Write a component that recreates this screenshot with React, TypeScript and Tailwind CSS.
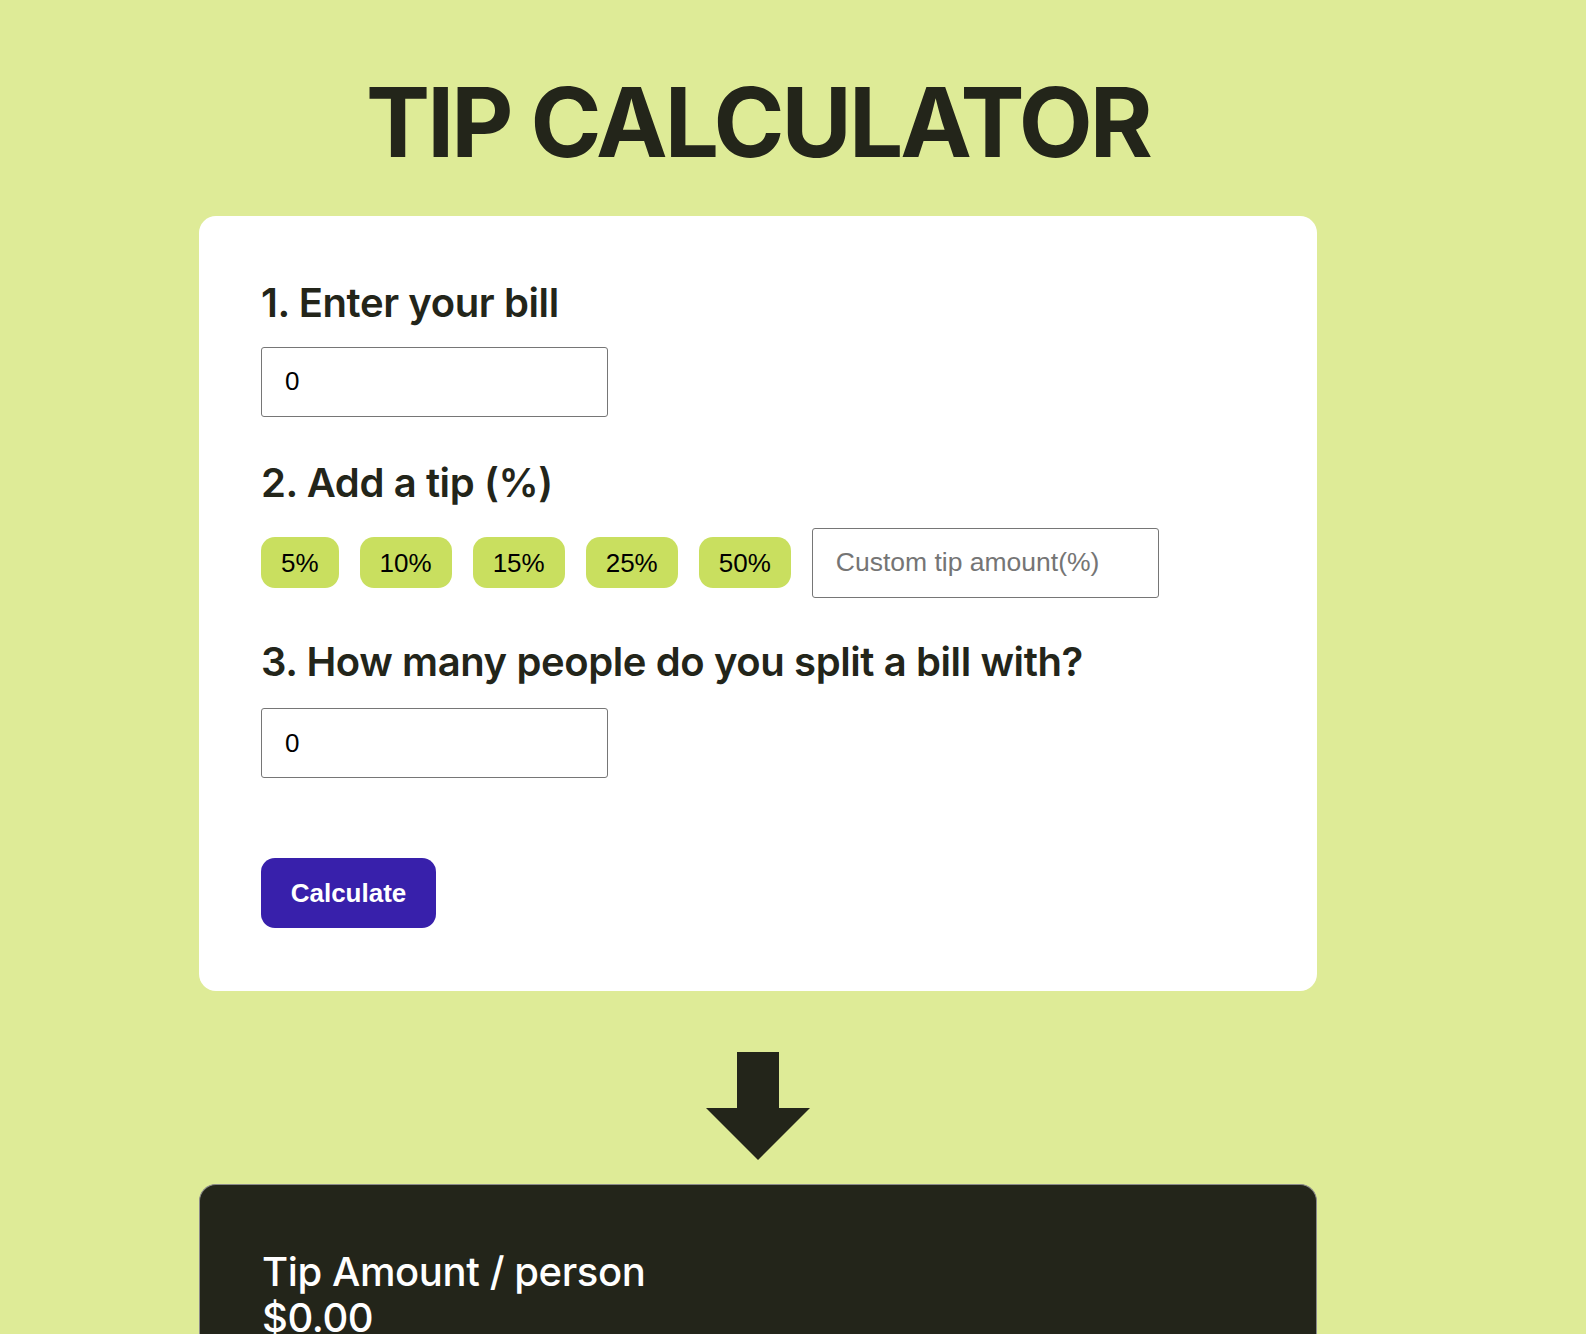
import { useState } from "react";

const tips = [5, 10, 15, 25, 50];

export default function App() {
  const [bill, setBill] = useState("0");
  const [people, setPeople] = useState("0");
  const [tip, setTip] = useState<number | null>(null);
  const [custom, setCustom] = useState("");
  const [result, setResult] = useState(0);

  const calculate = () => {
    const b = parseFloat(bill) || 0;
    const p = parseInt(people) || 0;
    const t = custom ? parseFloat(custom) || 0 : tip ?? 0;
    setResult(p > 0 ? (b * t) / 100 / p : 0);
  };

  return (
    <div className="min-h-screen bg-[#deeb97] pt-[64px] pb-10 font-['Inter',sans-serif] text-[#23251a]">
      <div className="ml-[199px] w-[1118px]">
        <h1 className="text-center text-[96px] font-bold leading-[1.21] tracking-[-0.03em]">TIP CALCULATOR</h1>

        <div className="mt-[36px] rounded-[17px] bg-white px-[62px] pt-[63px] pb-[63px]">
          <h2 className="text-[40px] font-semibold leading-[1.21] tracking-[-0.01em]">1. Enter your bill</h2>
          <input
            type="number"
            value={bill}
            onChange={(e) => setBill(e.target.value)}
            className="mt-[19px] block h-[70px] w-[347px] rounded-[3px] border border-[#767676] px-[23px] font-['Liberation_Sans',Arial,sans-serif] text-[26px] text-black outline-none"
          />

          <h2 className="mt-[42px] text-[40px] font-semibold leading-[1.21] tracking-[-0.01em]">2. Add a tip (%)</h2>
          <div className="mt-[21px] flex items-center gap-[21px] font-['Liberation_Sans',Arial,sans-serif] text-[26px] text-black">
            {tips.map((t) => (
              <button
                key={t}
                onClick={() => { setTip(t); setCustom(""); }}
                className={"h-[51px] rounded-[14px] px-[20px] leading-none " + (tip === t ? "bg-[#b4cc45]" : "bg-[#c9df5f]")}
              >
                {t}%
              </button>
            ))}
            <input
              type="number"
              value={custom}
              onChange={(e) => setCustom(e.target.value)}
              placeholder="Custom tip amount(%)"
              className="block h-[70px] w-[347px] rounded-[3px] border border-[#767676] px-[23px] text-[26.5px] text-black outline-none placeholder:text-[#757575]"
            />
          </div>

          <h2 className="mt-[40px] text-[40px] font-semibold leading-[1.21] tracking-[-0.01em]">3. How many people do you split a bill with?</h2>
          <input
            type="number"
            value={people}
            onChange={(e) => setPeople(e.target.value)}
            className="mt-[22px] block h-[70px] w-[347px] rounded-[3px] border border-[#767676] px-[23px] font-['Liberation_Sans',Arial,sans-serif] text-[26px] text-black outline-none"
          />

          <button
            onClick={calculate}
            className="mt-[80px] h-[70px] w-[175px] rounded-[14px] bg-[#3820ab] font-['Liberation_Sans',Arial,sans-serif] text-[26px] font-bold text-white"
          >
            Calculate
          </button>
        </div>

        <div className="mt-[61px] flex justify-center">
          <svg width="104" height="108" viewBox="0 0 104 108" className="text-[#23251a]">
            <polygon points="31,0 73,0 73,56 104,56 52,108 0,56 31,56" fill="currentColor" />
          </svg>
        </div>

        <div className="mt-[24px] rounded-t-[17px] border border-b-0 border-[#8a8a8a] bg-[#23251a] px-[62px] pt-[64px] pb-[60px] text-white">
          <p className="text-[40px] font-medium leading-[1.13] tracking-[-0.01em]">Tip Amount / person</p>
          <p className="text-[40px] font-medium leading-[1.13] tracking-[-0.01em]">${result.toFixed(2)}</p>
        </div>
      </div>
    </div>
  );
}
